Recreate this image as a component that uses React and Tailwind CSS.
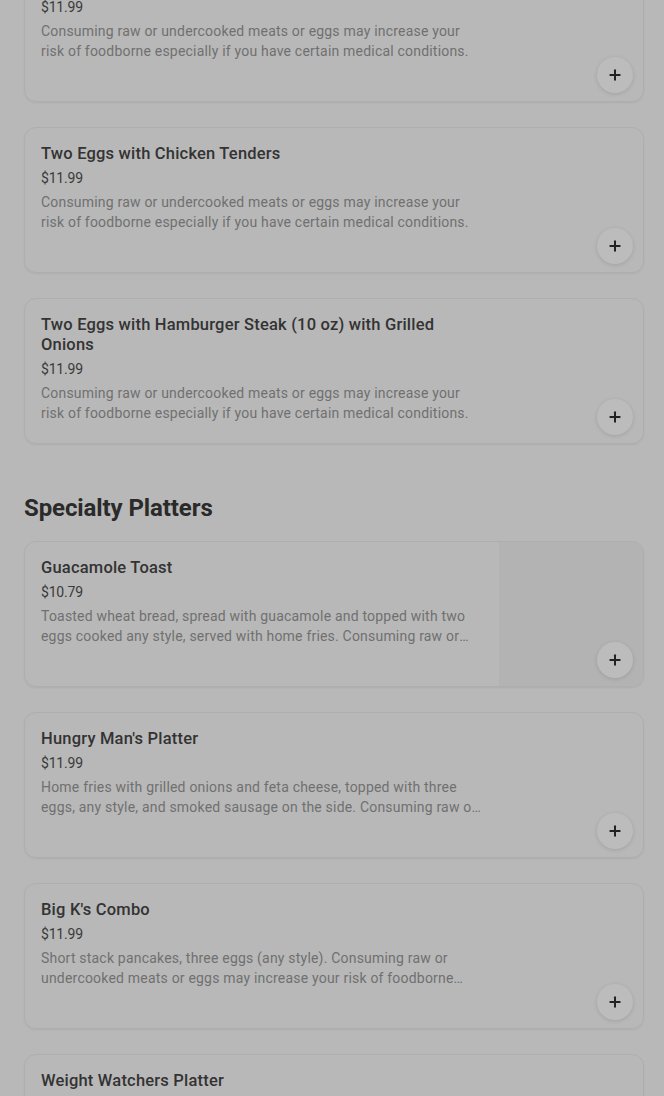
import { Plus } from "lucide-react";

const items = [
  {
    id: "prev",
    name: "Two Eggs with Pork Chops",
    price: "$11.99",
    desc: "Consuming raw or undercooked meats or eggs may increase your risk of foodborne especially if you have certain medical conditions.",
  },
  {
    id: "tenders",
    name: "Two Eggs with Chicken Tenders",
    price: "$11.99",
    desc: "Consuming raw or undercooked meats or eggs may increase your risk of foodborne especially if you have certain medical conditions.",
  },
  {
    id: "steak",
    name: "Two Eggs with Hamburger Steak (10 oz) with Grilled Onions",
    price: "$11.99",
    desc: "Consuming raw or undercooked meats or eggs may increase your risk of foodborne especially if you have certain medical conditions.",
  },
];

const platters = [
  {
    id: "guac",
    name: "Guacamole Toast",
    price: "$10.79",
    desc: "Toasted wheat bread, spread with guacamole and topped with two eggs cooked any style, served with home fries. Consuming raw or undercooked meats or eggs may increase your risk of foodborne illness.",
    image: true,
  },
  {
    id: "hungry",
    name: "Hungry Man's Platter",
    price: "$11.99",
    desc: "Home fries with grilled onions and feta cheese, topped with three eggs, any style, and smoked sausage on the side. Consuming raw or undercooked meats or eggs may increase your risk of foodborne illness.",
  },
  {
    id: "bigk",
    name: "Big K's Combo",
    price: "$11.99",
    desc: "Short stack pancakes, three eggs (any style). Consuming raw or undercooked meats or eggs may increase your risk of foodborne illness.",
  },
  {
    id: "weight",
    name: "Weight Watchers Platter",
    price: "$11.99",
    desc: "Egg whites, turkey sausage and fresh fruit. Consuming raw or undercooked meats or eggs may increase your risk of foodborne illness.",
  },
];

// 메뉴 카드 하나
const MenuCard = ({ item, className = "" }) => (
  <div
    className={`relative flex h-[146px] shrink-0 overflow-hidden rounded-xl border border-[#aeaeae] shadow-[0_1px_2px_rgba(0,0,0,0.06)] ${className}`}
  >
    <div className="flex-1 pl-4 pr-4 pt-4">
      <h3 className="text-[16.5px] font-medium leading-5 tracking-[0.2px] text-[#333]">{item.name}</h3>
      <p className="mt-[4px] text-[14px] leading-5 tracking-[-0.2px] text-[#3a3a3a]">{item.price}</p>
      <p className="mt-1 line-clamp-2 text-[14px] leading-5 tracking-[0.2px] text-[#707070]">{item.desc}</p>
    </div>
    <div className={`w-[144px] shrink-0 ${item.image ? "bg-[#b3b3b3]" : ""}`} />
    <button className="absolute bottom-[8px] right-[10px] flex h-9 w-9 items-center justify-center rounded-full bg-[#bcbcbc] shadow-[0_1px_4px_rgba(0,0,0,0.12)]">
      <Plus size={16} strokeWidth={3} className="text-[#222]" />
    </button>
  </div>
);

const App = () => {
  return (
    <div
      className="h-[1096px] w-full overflow-hidden bg-[#b8b8b8]"
      style={{ fontFamily: "Roboto, 'Noto Sans', sans-serif" }}
    >
      <div className="flex flex-col gap-[25px] pl-6 pr-5">
        {items.map((item, i) => (
          <MenuCard key={item.id} item={item} className={i === 0 ? "-mt-[44px]" : ""} />
        ))}
      </div>

      <h2 className="mt-[48px] pl-6 text-[24px] font-bold leading-8 tracking-[-0.1px] text-[#2a2a2a]">
        Specialty Platters
      </h2>

      <div className="mt-[17px] flex flex-col gap-[25px] pl-6 pr-5">
        {platters.map((item) => (
          <MenuCard key={item.id} item={item} />
        ))}
      </div>
    </div>
  );
};

export default App;
